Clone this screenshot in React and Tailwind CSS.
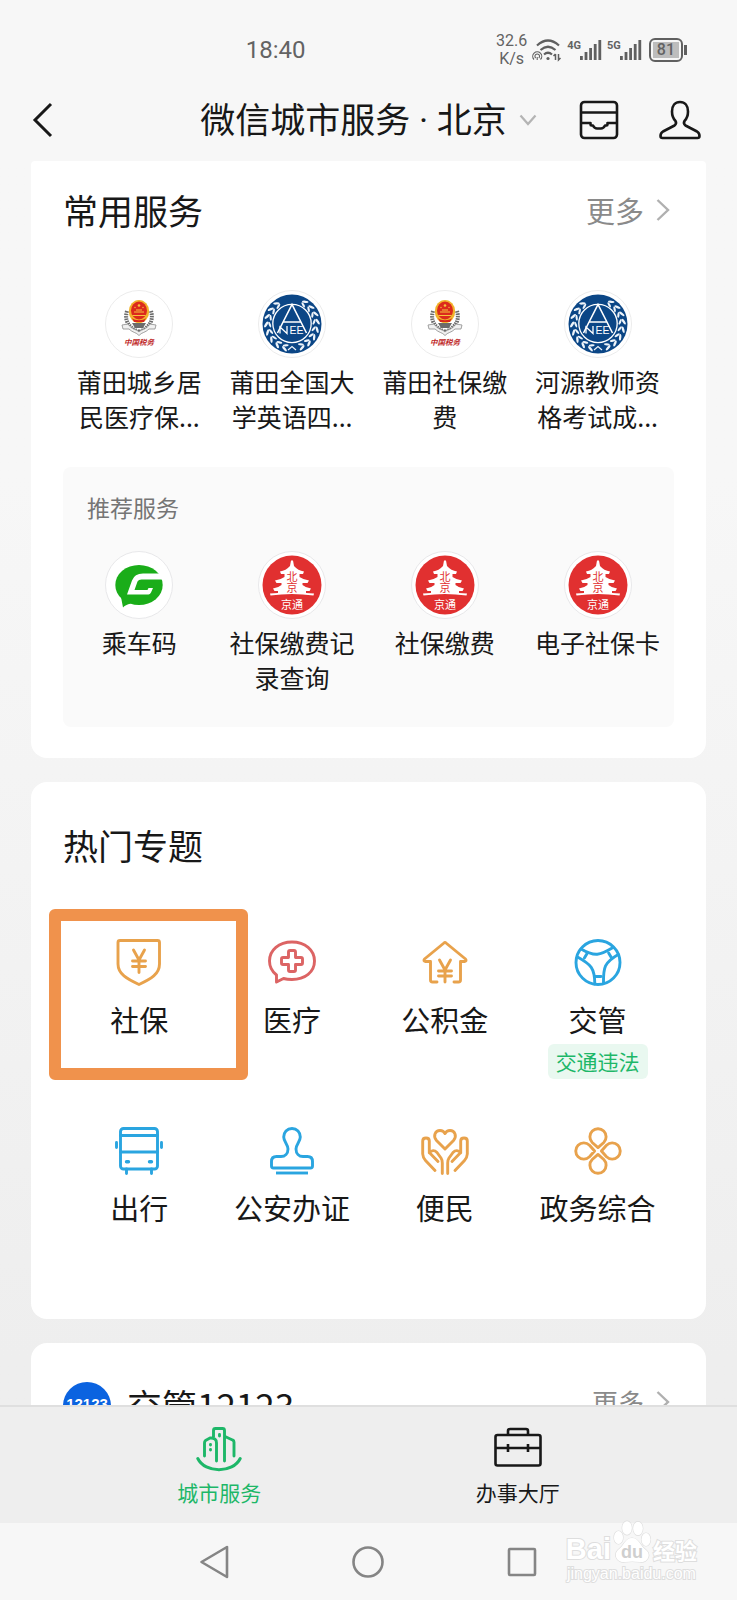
import React from "react";

const GOLD = "#e8a24c";
const BLUE = "#2aa5e0";
const RED = "#dc6464";

function LineIcon({ color, children }) {
  return (
    <svg width="48" height="48" viewBox="0 0 48 48" fill="none" stroke={color} strokeWidth="2.9" strokeLinecap="round" strokeLinejoin="round" aria-hidden="true">
      {children}
    </svg>
  );
}

/* ---------- round service logos ---------- */

function TaxLogo() {
  return (
    <svg width="68" height="68" viewBox="0 0 68 68" aria-hidden="true">
      <circle cx="34" cy="34" r="33.5" fill="#fff" stroke="#ececec" />
      <path d="M22 21C19 31 24 38 34 42C44 38 49 31 46 21" fill="none" stroke="#6b6b6b" strokeWidth="4" strokeDasharray="1.6 0.9" />
      <path d="M17 35L23 34C27 40 31 39 34 42C37 39 41 40 45 34L51 35L50 39L44 39C40 43 37 42 34 45.5C31 42 28 43 24 39L18 39Z" fill="#f1f1f1" stroke="#8b8b8b" strokeWidth="0.8" />
      <path d="M27 33H41L38 38H30Z" fill="#6b6b6b" />
      <ellipse cx="34" cy="21.5" rx="10.2" ry="11.5" fill="#f2b32c" />
      <ellipse cx="34" cy="20.5" rx="8" ry="9" fill="#dc2a1c" />
      <path d="M29 22H39M27.5 25.5H40.5M31 20H37" stroke="#f6c53c" strokeWidth="1.2" />
      <circle cx="34" cy="15.5" r="1.3" fill="#f6c53c" />
      <circle cx="30" cy="17.5" r="0.7" fill="#f6c53c" />
      <circle cx="38" cy="17.5" r="0.7" fill="#f6c53c" />
      <path d="M27 28C30 31 38 31 41 28L39 32H29Z" fill="#d8281d" />
      <text x="34" y="55" textAnchor="middle" fontSize="7.5" fontWeight="700" fontStyle="italic" fill="#c02a2a">中国税务</text>
    </svg>
  );
}

const LEAVES = [20, 38, 56, 74, 92, 110, 128, 146];

function ExamLogo() {
  return (
    <svg width="68" height="68" viewBox="0 0 68 68" aria-hidden="true">
      <circle cx="34" cy="34" r="33.5" fill="#fff" stroke="#ececec" />
      <circle cx="34" cy="34" r="29.5" fill="#0b4686" />
      {[1, -1].map((side) =>
        LEAVES.map((a) => (
          <g key={`${side}-${a}`} transform={`rotate(${180 + side * a} 34 34)`} fill="#eef4fa">
            <ellipse cx="32.6" cy="8.2" rx="3.3" ry="1.2" transform={`rotate(${side * 30} 32.6 8.2)`} />
            <ellipse cx="32.6" cy="11.8" rx="3" ry="1.1" transform={`rotate(${side * -25} 32.6 11.8)`} />
          </g>
        ))
      )}
      <path d="M30 60L34 56.5L38 60" stroke="#eef4fa" strokeWidth="1.2" fill="none" />
      <circle cx="34" cy="33.5" r="19.2" fill="#0b4686" stroke="#fff" strokeWidth="1.3" />
      <path d="M19.5 43L34 14.5L48.5 43M25 32H43" fill="none" stroke="#fff" strokeWidth="1.6" />
      <path d="M22 43.5V37L29 43.5V36" fill="none" stroke="#fff" strokeWidth="1.3" />
      <text x="38.5" y="43.7" textAnchor="middle" fontSize="10.5" fill="#fff" fontFamily="Liberation Sans, sans-serif">EE</text>
    </svg>
  );
}

function RideLogo() {
  return (
    <svg width="68" height="68" viewBox="0 0 68 68" aria-hidden="true">
      <circle cx="34" cy="34" r="33.5" fill="#fff" stroke="#e8e8ea" />
      <ellipse cx="34" cy="34" rx="23.7" ry="20" fill="#1aad19" />
      <path d="M16 46L18 56.5Q20 54 26 52.5Z" fill="#1aad19" />
      <path d="M59 22.5H38Q29.5 22.5 27 29.5L22 43.5H43.5Q45 43.5 46 41.5L48 37H43.5L42.5 39H29.5L32.5 30.5Q33.5 28.5 36.5 28.5H59Z" fill="#fff" />
    </svg>
  );
}

function JingtongLogo() {
  return (
    <svg width="68" height="68" viewBox="0 0 68 68" aria-hidden="true">
      <circle cx="34" cy="34" r="33.5" fill="#fff" stroke="#e8e8ea" />
      <circle cx="34" cy="34" r="29.5" fill="#e13030" />
      <path
        d="M33 9.5H35L36 15Q40 19.5 46 20.5L45 23H41.5V26Q46 29 51 29.5L49.5 32H44.5V34Q48 37 53 37.5L51.5 40H48V42L56 42.5L55.5 44.5Q34 41.5 12.5 44.5L12 42.5L20 42V40H16.5L15 37.5Q20 37 23.5 34V32H18.5L17 29.5Q22 29 26.5 26V23H23L22 20.5Q28 19.5 32 15Z"
        fill="#fff"
      />
      <text x="34" y="20" fontSize="11" fill="#e13030" style={{ writingMode: "vertical-rl" }}>北京</text>
      <text x="34" y="58" textAnchor="middle" fontSize="11" fill="#fff">京通</text>
    </svg>
  );
}

/* ---------- topic icons ---------- */

function ShieldYen() {
  return (
    <LineIcon color={GOLD}>
      <path d="M5 1.5H42.5Q44.5 1.5 44.5 3.5V25C44.5 35 36 40 24 45.5C12 40 3 35 3 25V3.5Q3 1.5 5 1.5Z" />
      <path d="M18.5 11L24 21L29.5 11M17.5 22H30.5M17.5 27.5H30.5M24 21V33.5" />
    </LineIcon>
  );
}

function Medical() {
  return (
    <LineIcon color={RED}>
      <path d="M24 3C37 3 46.5 11 46.5 22C46.5 33 37 40.5 24 40.5Q19 40.5 15.5 39.5L8.5 43V36C4 32.5 1.5 28 1.5 22C1.5 11 11 3 24 3Z" />
      <path d="M22 11.5H26Q27.5 11.5 27.5 13V18.5H33Q34.5 18.5 34.5 20V24Q34.5 25.5 33 25.5H27.5V31Q27.5 32.5 26 32.5H22Q20.5 32.5 20.5 31V25.5H15Q13.5 25.5 13.5 24V20Q13.5 18.5 15 18.5H20.5V13Q20.5 11.5 22 11.5Z" />
    </LineIcon>
  );
}

function HouseYen() {
  return (
    <LineIcon color={GOLD}>
      <path d="M16 43H11.5Q9.5 43 9.5 41V22.5H4.5Q2 22 3.5 20L23 4Q24 3 25 4L44.5 20Q46 22 43.5 22.5H39.5V41Q39.5 43 37.5 43H33" />
      <path d="M18.5 21L24 31L29.5 21M17.5 32H30.5M17.5 37H30.5M24 31V43" />
    </LineIcon>
  );
}

function Steering() {
  return (
    <LineIcon color={BLUE}>
      <circle cx="24" cy="23.5" r="22" />
      {[0, 120, 240].map((a) => (
        <g key={a} transform={`rotate(${a} 24 23.5)`}>
          <path d="M20.8 45C20.8 29 17 25.5 3.5 18" />
          <path d="M21 37.5H27" />
        </g>
      ))}
    </LineIcon>
  );
}

function Bus() {
  return (
    <LineIcon color={BLUE}>
      <rect x="5.5" y="1.5" width="37" height="40.5" rx="3" />
      <path d="M5.5 8.5H42.5M5.5 25H42.5M11.5 42V46.5M36.5 42V46.5M1.5 15.5V20.5M46.5 15.5V20.5" />
      <path d="M11.5 34.8H13.5M34.5 34.8H36.5" strokeWidth="3.4" />
    </LineIcon>
  );
}

function Stamp() {
  return (
    <LineIcon color={BLUE}>
      <path d="M24 1.5C29 1.5 32.3 5.2 32.3 10C32.3 14.5 28 17.5 28 22C28 26.5 31 29.5 35 29.5H39.5Q44.5 29.5 44.5 34.5V39Q44.5 41 42.5 41H5.5Q3.5 41 3.5 39V34.5Q3.5 29.5 8.5 29.5H13C17 29.5 20 26.5 20 22C20 17.5 15.7 14.5 15.7 10C15.7 5.2 19 1.5 24 1.5Z" />
      <path d="M8 46H40" strokeLinecap="butt" />
    </LineIcon>
  );
}

function Hands() {
  return (
    <LineIcon color={GOLD}>
      <path d="M24 22L15.5 13.5C11.5 9 14.5 3.5 19 3.5Q22.5 3.5 24 6.5Q25.5 3.5 29 3.5C33.5 3.5 36.5 9 32.5 13.5Z" />
      {[0, 1].map((m) => (
        <path
          key={m}
          transform={m ? "translate(48 0) scale(-1 1)" : undefined}
          d="M14 43.5L4.5 33.5Q2 31 1.7 27V14Q1.7 11 5 11Q8.3 11 8.3 14V25.5L17 34.5M8.3 26Q12 21.5 16 25.5L20 31Q21.3 33 21.3 36V46.5"
        />
      ))}
    </LineIcon>
  );
}

function Clover() {
  return (
    <LineIcon color={GOLD}>
      {[0, 90, 180, 270].map((a) => (
        <path key={a} transform={`rotate(${a} 24 24)`} d="M24 20.6L18.2 15.5A8.1 8.1 0 1 1 29.8 15.5Z" />
      ))}
    </LineIcon>
  );
}

/* ---------- data ---------- */

const COMMON = [
  { label: "莆田城乡居民医疗保...", Logo: TaxLogo },
  { label: "莆田全国大学英语四...", Logo: ExamLogo },
  { label: "莆田社保缴费", Logo: TaxLogo },
  { label: "河源教师资格考试成...", Logo: ExamLogo },
];

const RECOMMENDED = [
  { label: "乘车码", Logo: RideLogo },
  { label: "社保缴费记录查询", Logo: JingtongLogo },
  { label: "社保缴费", Logo: JingtongLogo },
  { label: "电子社保卡", Logo: JingtongLogo },
];

const TOPICS = [
  { label: "社保", Icon: ShieldYen, marked: true },
  { label: "医疗", Icon: Medical },
  { label: "公积金", Icon: HouseYen },
  { label: "交管", Icon: Steering, tag: "交通违法" },
  { label: "出行", Icon: Bus },
  { label: "公安办证", Icon: Stamp },
  { label: "便民", Icon: Hands },
  { label: "政务综合", Icon: Clover },
];

/* ---------- building blocks ---------- */

function ServiceGrid({ items }) {
  return (
    <div className="grid grid-cols-4 items-start">
      {items.map(({ label, Logo }) => (
        <button key={label} type="button" className="flex flex-col items-center gap-1.5 px-3 text-[25px] leading-[35px]">
          <Logo />
          <span className="break-all">{label}</span>
        </button>
      ))}
    </div>
  );
}

function Chevron() {
  return (
    <svg width="14" height="24" viewBox="0 0 14 24" fill="none" stroke="#b0b0b0" strokeWidth="2.4" aria-hidden="true">
      <path d="M1.5 2L12 12L1.5 22" />
    </svg>
  );
}

function Bars() {
  return (
    <svg width="22" height="20" viewBox="0 0 22 20" fill="#606060" aria-hidden="true">
      <rect x="0" y="16" width="2.8" height="4" />
      <rect x="4.6" y="12" width="2.8" height="8" />
      <rect x="9.2" y="8" width="2.8" height="12" />
      <rect x="13.8" y="4" width="2.8" height="16" />
      <rect x="18.4" y="0" width="2.8" height="20" />
    </svg>
  );
}

function Signal({ label }) {
  return (
    <div className="flex">
      <span className="-mr-px text-[11px] leading-3 font-bold">{label}</span>
      <Bars />
    </div>
  );
}

function StatusBar() {
  return (
    <div className="grid h-20 grid-cols-3 items-center pt-5 font-[Roboto,sans-serif] text-[#636363]">
      <span className="col-start-2 text-2xl">18:40</span>
      <div className="flex items-center justify-end gap-[5px] pr-[50px]">
        <span className="text-center text-base leading-[18px]">
          32.6
          <br />
          K/s
        </span>
        <svg width="30" height="24" viewBox="0 0 30 24" fill="none" stroke="#606060" strokeWidth="2.2" aria-hidden="true">
          <path d="M5 7.5Q16 -2.5 27 7.5M8.5 12Q16 5.5 23.5 12M12 16.5Q16 13 20 16.5" />
          <circle cx="16" cy="20.5" r="1.6" fill="#606060" stroke="none" />
          <path d="M2 21.5A4.5 4.5 0 1 1 8.5 21.5M3.7 20A2.3 2.3 0 1 1 6.8 20M5.2 19V22" strokeWidth="1.1" />
          <path d="M23.5 16V22M21.5 18L23.5 16M26.5 16V22L28.5 20" strokeWidth="1.5" />
        </svg>
        <Signal label="4G" />
        <Signal label="5G" />
        <div className="flex items-center gap-px pl-0.5">
          <span className="rounded-md border-2 border-[#606060] p-0.5">
            <span className="block bg-[#bdbdbd] px-1 text-base leading-4 font-medium">81</span>
          </span>
          <span className="h-2.5 w-[3px] bg-[#606060]" />
        </div>
      </div>
    </div>
  );
}

function TitleBar() {
  return (
    <div className="grid h-[81px] grid-cols-[1fr_auto_1fr] items-center px-9 pb-px">
      <button type="button" aria-label="返回" className="justify-self-start">
        <svg width="20" height="38" viewBox="2 0 20 38" fill="none" stroke="#181818" strokeWidth="3" overflow="visible" aria-hidden="true">
          <path d="M17 3L1 19L17 35" />
        </svg>
      </button>
      <button type="button" className="flex items-center gap-3">
        <h1 className="text-[35px] leading-[52px]">
          微信城市服务<span className="font-[Roboto,sans-serif]"> · </span>北京
        </h1>
        <svg width="18" height="12" viewBox="0 0 18 12" fill="none" stroke="#b4b4b4" strokeWidth="2.2" aria-hidden="true">
          <path d="M1.5 1.5L9 10L16.5 1.5" />
        </svg>
      </button>
      <div className="flex items-center gap-10 justify-self-end">
        <button type="button" aria-label="订单">
          <svg width="40" height="40" viewBox="0 0 40 40" fill="none" stroke="#181818" strokeWidth="2.6" strokeLinejoin="round" aria-hidden="true">
            <rect x="2" y="2" width="36" height="36" rx="3.5" />
            <path d="M2 12.5H38M2 23H11.5V24.5Q11.5 25.5 12.5 25.5H14Q15.5 28.5 18 28.5H22Q24.5 28.5 26 25.5H27.5Q28.5 25.5 28.5 24.5V23H38" />
          </svg>
        </button>
        <button type="button" aria-label="我的">
          <svg width="42" height="40" viewBox="0 0 42 40" fill="none" stroke="#181818" strokeWidth="2.6" strokeLinejoin="round" aria-hidden="true">
            <path d="M21 2C26 2 29 6 29 11.5C29 16 27.5 19 25.5 21Q24 23.5 26.5 25.5L38 31.5Q40.5 33 40.5 36Q40.5 38 38.5 38H3.5Q1.5 38 1.5 36Q1.5 33 4 31.5L15.5 25.5Q18 23.5 16.5 21C14.5 19 13 16 13 11.5C13 6 16 2 21 2Z" />
          </svg>
        </button>
      </div>
    </div>
  );
}

function Watermark() {
  return (
    <div className="absolute right-10 bottom-4 flex flex-col items-center text-white [paint-order:stroke_fill] [-webkit-text-stroke:2px_#dedede]">
      <div className="flex items-end gap-0.5 leading-[30px]">
        <span className="font-['Liberation_Sans',sans-serif] text-[29px] font-bold">Bai</span>
        <svg width="38" height="44" viewBox="0 0 38 44" fill="#fff" stroke="#dedede" strokeWidth="1.2" aria-hidden="true">
          <ellipse cx="14" cy="8" rx="4.8" ry="6.8" />
          <ellipse cx="25" cy="8.5" rx="4.8" ry="6.8" />
          <ellipse cx="5.5" cy="17.5" rx="4.5" ry="6.5" />
          <ellipse cx="33" cy="19.5" rx="4.5" ry="6.5" />
          <path d="M19 18C26 18 27 26 33 30C39 35 34 43 27 42Q19 41 12 42C4 43 0 35 5 30C11 26 12 18 19 18Z" />
          <text x="19" y="38" textAnchor="middle" fontSize="18" fontWeight="700" fontFamily="Liberation Sans, sans-serif" fill="#cfcfcf" stroke="none" className="[-webkit-text-stroke:0px]">du</text>
        </svg>
        <span className="text-[22px] font-bold">经验</span>
      </div>
      <span className="font-['Liberation_Sans',sans-serif] text-base leading-5">jingyan.baidu.com</span>
    </div>
  );
}

export default function App() {
  return (
    <div className="relative flex h-screen flex-col bg-gradient-to-b from-[#f7f7f7] from-30% to-[#eeeeee] to-85% font-['Noto_Sans_CJK_SC',sans-serif] text-[#181818]">
      <header className="shrink-0 bg-[#f7f7f7]">
        <StatusBar />
        <TitleBar />
      </header>

      <main className="flex min-h-0 flex-1 flex-col gap-6 overflow-hidden px-[31px]">
        <section className="shrink-0 rounded-t rounded-b-2xl bg-white px-8 pt-[23px] pb-[31px]">
          <div className="flex items-center justify-between">
            <h2 className="text-[35px] leading-[52px]">常用服务</h2>
            <a href="#common" className="flex items-center gap-3 pr-1 text-[29px] leading-[52px] text-[#8a8a8a]">
              更多
              <Chevron />
            </a>
          </div>
          <div className="mt-[54px]">
            <ServiceGrid items={COMMON} />
          </div>
          <div className="mt-[33px] rounded-lg bg-[#fafafa] pt-6 pb-8">
            <h3 className="mb-7 px-6 text-[23px] leading-8 text-[#757575]">推荐服务</h3>
            <ServiceGrid items={RECOMMENDED} />
          </div>
        </section>

        <section className="shrink-0 rounded-2xl bg-white px-8 pt-[37px] pb-[92px]">
          <h2 className="text-[35px] leading-[52px]">热门专题</h2>
          <div className="mt-[68px] grid grid-cols-4 items-start gap-y-12">
            {TOPICS.map(({ label, Icon, tag, marked }) => (
              <button key={label} type="button" className="relative flex flex-col items-center">
                <Icon />
                <span className="mt-3 text-[29px] leading-10">{label}</span>
                {tag && (
                  <span className="mt-[5px] rounded-md bg-[#e9f8f0] px-2 text-[21px] leading-[35px] text-[#1db768]">{tag}</span>
                )}
                {marked && (
                  <span className="pointer-events-none absolute -top-[30px] -right-8 -left-[14px] h-[171px] rounded-md border-12 border-[#f0924c]" />
                )}
              </button>
            ))}
          </div>
        </section>

        <section className="shrink-0 rounded-2xl bg-white px-8 pt-[39px] pb-10">
          <div className="flex items-start gap-4">
            <svg width="48" height="48" viewBox="0 0 48 48" aria-hidden="true">
              <circle cx="24" cy="24" r="24" fill="#0b63e0" />
              <text x="24" y="27" textAnchor="middle" fontSize="15" fontWeight="700" fill="#fff" fontFamily="Liberation Sans, sans-serif">12123</text>
            </svg>
            <h2 className="flex-1 text-[35px] leading-[46px]">交管12123</h2>
            <a href="#traffic" className="flex items-center gap-3 pr-1 text-[26px] leading-10 text-[#8a8a8a]">
              更多
              <Chevron />
            </a>
          </div>
        </section>
      </main>

      <nav className="grid h-[118px] shrink-0 grid-cols-2 border-t-2 border-[#dfdfdf] bg-[#eeeeee] px-[70px] pt-5 text-[21px] leading-[30px]">
        <a href="#city" className="flex flex-col items-center gap-1 text-[#1db768]">
          <svg width="46" height="46" viewBox="0 0 46 46" fill="none" stroke="#1db768" strokeWidth="2.9" strokeLinecap="round" strokeLinejoin="round" aria-hidden="true">
            <path d="M1.8 31.5C9 46.5 37 46.5 44.2 31.5" strokeWidth="3" />
            <path d="M8.5 29V16Q8.5 14.5 9.5 13.5L14 11Q20.5 10.5 20.5 16V34M17.5 10V3.5Q17.5 1.5 19.5 1.5H26.5Q28.5 1.5 28.5 3.5V34M29 9.5L36.5 13Q38 13.5 38 15V29" />
            <path d="M23.5 7.5V9M14.5 17.5V18M14.5 22.5V23" />
          </svg>
          城市服务
        </a>
        <a href="#hall" className="flex flex-col items-center gap-1">
          <svg width="48" height="46" viewBox="0 0 48 46" fill="none" stroke="#181818" strokeWidth="2.6" strokeLinejoin="round" aria-hidden="true">
            <rect x="1.5" y="8" width="45" height="30.5" rx="2" />
            <path d="M14 8V4Q14 2 16 2H32Q34 2 34 4V8M1.5 21H46.5M14 17V25M34 17V25" />
          </svg>
          办事大厅
        </a>
      </nav>

      <div className="grid h-[77px] shrink-0 grid-cols-3 place-items-center bg-[#f7f7f7] px-[138px]">
        <button type="button" aria-label="后退">
          <svg width="34" height="34" viewBox="0 0 34 34" fill="none" stroke="#858585" strokeWidth="2.6" strokeLinejoin="round" aria-hidden="true">
            <path d="M29 2V32L3.5 17Z" />
          </svg>
        </button>
        <button type="button" aria-label="主屏幕">
          <svg width="34" height="34" viewBox="0 0 34 34" fill="none" stroke="#858585" strokeWidth="2.6" aria-hidden="true">
            <circle cx="17" cy="17" r="14.5" />
          </svg>
        </button>
        <button type="button" aria-label="最近任务">
          <svg width="34" height="34" viewBox="0 0 34 34" fill="none" stroke="#858585" strokeWidth="2.6" strokeLinejoin="round" aria-hidden="true">
            <rect x="4" y="4" width="26" height="26" rx="1" />
          </svg>
        </button>
      </div>

      <Watermark />
    </div>
  );
}
